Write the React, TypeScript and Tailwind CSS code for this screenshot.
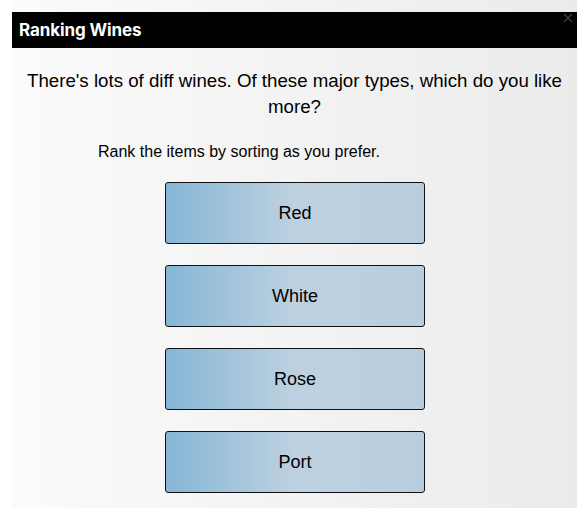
import { X } from 'lucide-react';

const items = ['Red', 'White', 'Rose', 'Port'];

export default function App() {
  return (
    <div className="min-h-[508px] bg-white pl-3 overflow-hidden">
      <div className="min-h-[508px] bg-gradient-to-r from-[#fbfbfb] to-[#ebebeb] pt-3 font-['Liberation_Sans',Arial,sans-serif] text-black">
        {/* Header */}
        <div className="relative h-9 bg-black flex items-center pl-[7px] pt-[2px]">
          <h1 className="text-white text-[17px] font-bold font-['Inter',sans-serif] tracking-[-0.1px]">Ranking Wines</h1>
          <X className="absolute right-[2px] -top-[1px] text-[#3c3c3c]" size={14} strokeWidth={2.5} />
        </div>

        {/* Question */}
        <p className="mt-[20px] px-[12px] text-center text-[18.7px] leading-[26px]">
          There's lots of diff wines. Of these major types, which do you like more?
        </p>

        <p className="mt-[23px] pl-[86px] text-[16px] leading-[18px]">
          Rank the items by sorting as you prefer.
        </p>

        {/* Rankable list */}
        <div className="mt-[21px] flex flex-col items-start pl-[153px] gap-[21px]">
          {items.map((item) => (
            <div
              key={item}
              className="w-[260px] h-[62px] rounded-[3px] border border-[#111] bg-gradient-to-r from-[#86b6d6] via-[#bdd1e0] via-50% to-[#b8cedf] flex items-center justify-center text-[18px]"
            >
              {item}
            </div>
          ))}
        </div>
      </div>
    </div>
  );
}
